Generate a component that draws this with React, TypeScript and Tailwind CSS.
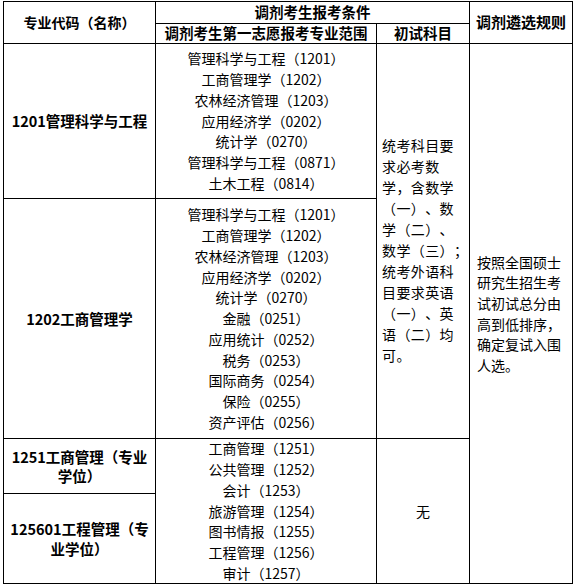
const cell = "border-r border-b border-black flex items-center justify-center";

const row1List = [
  "管理科学与工程（1201）",
  "工商管理学（1202）",
  "农林经济管理（1203）",
  "应用经济学（0202）",
  "统计学（0270）",
  "管理科学与工程（0871）",
  "土木工程（0814）",
];

const row2List = [
  "管理科学与工程（1201）",
  "工商管理学（1202）",
  "农林经济管理（1203）",
  "应用经济学（0202）",
  "统计学（0270）",
  "金融（0251）",
  "应用统计（0252）",
  "税务（0253）",
  "国际商务（0254）",
  "保险（0255）",
  "资产评估（0256）",
];

const row3List = [
  "工商管理（1251）",
  "公共管理（1252）",
  "会计（1253）",
  "旅游管理（1254）",
  "图书情报（1255）",
  "工程管理（1256）",
  "审计（1257）",
];

const examLines = [
  "统考科目要",
  "求必考数",
  "学，含数学",
  "（一）、数",
  "学（二）、",
  "数学（三）；",
  "统考外语科",
  "目要求英语",
  "（一）、英",
  "语（二）均",
  "可。",
];

const ruleLines = ["按照全国硕士", "研究生招生考", "试初试总分由", "高到低排序，", "确定复试入围", "人选。"];

function MajorList({ items }: { items: string[] }) {
  return (
    <div className="flex flex-col items-center text-[14px] leading-[20.8px]">
      {items.map((t, i) => (
        <div key={i} className="whitespace-nowrap">{t}</div>
      ))}
    </div>
  );
}

export default function App() {
  return (
    <div className="bg-white w-[576px] h-[587px] pt-[1px] pl-[3px] font-['Noto_Sans_CJK_SC',sans-serif] text-black [text-spacing-trim:space-all]">
      <div className="grid w-[570px] grid-cols-[152px_221px_93px_103px] grid-rows-[22px_20px_155px_240px_55px_90px] border-l border-t border-black">
        {/* header */}
        <div className={`${cell} row-span-2 font-bold text-[14px]`}>专业代码（名称）</div>
        <div className={`${cell} col-span-2 font-bold text-[14.5px] leading-none`}>调剂考生报考条件</div>
        <div className={`${cell} row-span-2 font-bold text-[15px]`}>调剂遴选规则</div>
        <div className={`${cell} font-bold text-[14.5px] leading-none whitespace-nowrap`}>调剂考生第一志愿报考专业范围</div>
        <div className={`${cell} font-bold text-[14.5px] leading-none`}>初试科目</div>

        {/* 1201 */}
        <div className={`${cell} font-bold text-[14.5px]`}>1201管理科学与工程</div>
        <div className={cell}>
          <MajorList items={row1List} />
        </div>
        <div className={`${cell} row-span-2 pt-[18px]`}>
          <div className="flex flex-col w-full pl-[5px] text-[14px] tracking-[0.4px] leading-[21px]">
            {examLines.map((t, i) => (
              <div key={i} className="whitespace-nowrap">{t}</div>
            ))}
          </div>
        </div>
        <div className={`${cell} row-span-4`}>
          <div className="flex flex-col w-full pl-[7px] text-[14px] leading-[20.6px]">
            {ruleLines.map((t, i) => (
              <div key={i} className="whitespace-nowrap">{t}</div>
            ))}
          </div>
        </div>

        {/* 1202 */}
        <div className={`${cell} font-bold text-[14.5px]`}>1202工商管理学</div>
        <div className={cell}>
          <MajorList items={row2List} />
        </div>

        {/* 1251 */}
        <div className={`${cell} font-bold text-[14.5px] leading-[19px] text-center`}>
          1251工商管理（专业
          <br />
          学位）
        </div>
        <div className={`${cell} row-span-2`}>
          <MajorList items={row3List} />
        </div>
        <div className={`${cell} row-span-2 text-[14px]`}>无</div>

        {/* 125601 */}
        <div className={`${cell} font-bold text-[14.5px] leading-[20px] text-center`}>
          125601工程管理（专
          <br />
          业学位）
        </div>
      </div>
    </div>
  );
}
